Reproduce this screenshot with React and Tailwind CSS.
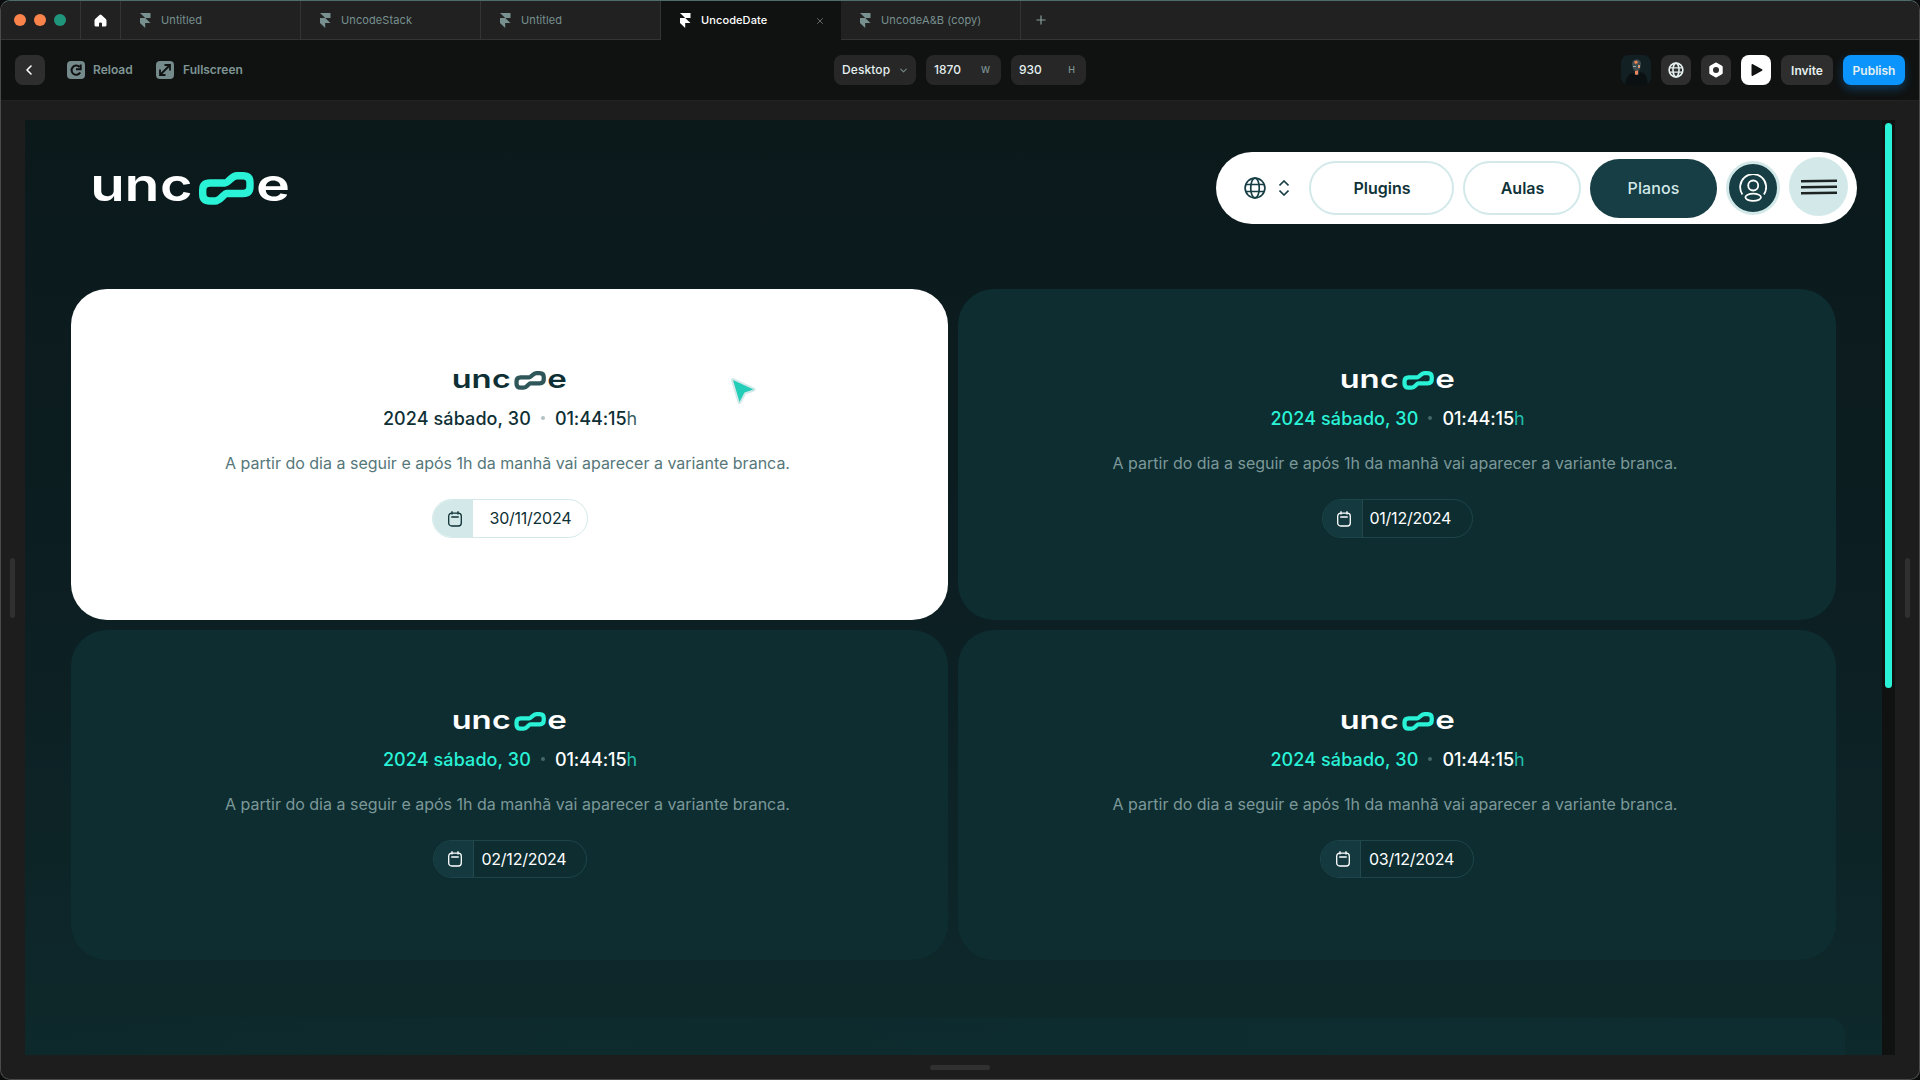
import { ChevronDown, ChevronLeft, Plus, X } from "lucide-react";

const tabs = [
  { name: "Untitled" },
  { name: "UncodeStack" },
  { name: "Untitled" },
  { name: "UncodeDate", active: true },
  { name: "UncodeA&B (copy)" },
];

const cards = [
  { date: "30/11/2024", light: true, pill: "h-[39px] w-[156px]", pad: "pb-px pl-[17px]" },
  { date: "01/12/2024", pill: "h-[39px] w-[151px]", pad: "pb-px pl-[7px]" },
  { date: "02/12/2024", pill: "h-[38px] w-[154px]", pad: "pl-[8px]" },
  { date: "03/12/2024", pill: "h-[38px] w-[154px]", pad: "pl-[8px]" },
];

function Logo({ className, link }) {
  return (
    <svg viewBox="0 0 195 33" className={className} overflow="visible">
      <g fill="currentColor" fontFamily="Inter, sans-serif" fontWeight="600" fontSize="45">
        <text x="-2.800" y="28.900" textLength="34.500" lengthAdjust="spacingAndGlyphs">u</text>
        <text x="31.500" y="28.900" textLength="35" lengthAdjust="spacingAndGlyphs">n</text>
        <text x="67" y="28.900" textLength="32.500" lengthAdjust="spacingAndGlyphs">c</text>
        <text x="163" y="28.900" textLength="34" lengthAdjust="spacingAndGlyphs">e</text>
      </g>
      <path
        d="M117 11H132C135.500 11 138.500 3.700 144 3.700H150Q157 3.700 157 10.500V14.500Q157 21.500 150 21.500H134C130.500 21.500 127.500 29 122 29H117Q109.700 29 109.700 22V18Q109.700 11 117 11Z"
        fill="none"
        stroke={link}
        strokeWidth="7.400"
      />
    </svg>
  );
}

function FramerIcon({ className }) {
  return (
    <svg viewBox="0 0 12 15" className={className} fill="currentColor">
      <path d="M1 0H11.500V5H6.200ZM1 5H6.200L11.500 10H6.200V15L1 10Z" />
    </svg>
  );
}

function TabBar() {
  return (
    <div className="flex h-[39px] shrink-0 bg-[#212121]">
      <div className="flex w-[80px] items-center gap-2 border-r border-b border-[#343434] pl-[13px]">
        <span className="size-3 rounded-full bg-[#f9834a]" />
        <span className="size-3 rounded-full bg-[#f9834a]" />
        <span className="size-3 rounded-full bg-[#1f967c]" />
      </div>
      <div className="flex w-[40px] items-center justify-center border-r border-b border-[#343434]">
        <svg viewBox="0 0 13 13" className="size-[13px]" fill="#fff">
          <path d="M5.500 0.900Q6.500 0.200 7.500 0.900L11.800 5Q12.500 5.800 12.500 6.800V11Q12.500 12.500 11 12.500H8V9.500Q8 8.500 6.500 8.500T5 9.500V12.500H2Q0.500 12.500 0.500 11V6.800Q0.500 5.800 1.200 5Z" />
        </svg>
      </div>
      {tabs.map((tab, i) => (
        <div
          key={i}
          className={
            tab.active
              ? "flex w-[180px] items-center bg-[#101211] pl-[18px] font-medium text-white"
              : "flex w-[180px] items-center border-r border-b border-[#343434] pl-[18px] text-[#789090]"
          }
        >
          <FramerIcon className="h-[15px] w-3" />
          <span className="ml-[10px] text-[11px] tracking-[0.1px]">{tab.name}</span>
          {tab.active && <X className="mr-4 ml-auto size-[10px] text-[#777]" />}
        </div>
      ))}
      <div className="flex flex-1 items-center border-b border-[#343434] pl-[13px]">
        <Plus className="size-[14px] text-[#8ba0a0]" strokeWidth={2} />
      </div>
    </div>
  );
}

function Toolbar() {
  return (
    <div className="flex h-[61px] shrink-0 items-center justify-between border-b border-[#232323] bg-[#101211] pr-[14px] pl-[14px] text-[12px] font-semibold text-[#7f9595]">
      <div className="flex flex-1 items-center">
        <div className="flex size-[30px] items-center justify-center rounded-lg bg-[#2e2e2e]">
          <ChevronLeft className="mr-0.5 size-4 text-white" strokeWidth={2.4} />
        </div>
        <svg viewBox="0 0 18 18" className="ml-[22px] size-[18px]" fill="none" stroke="#101211" strokeWidth="2">
          <rect width="18" height="18" rx="4" fill="#748a8b" stroke="none" />
          <path d="M12.500 6A4.600 4.600 0 1 0 13.200 11.500M13.700 3.500V8.200H9" />
        </svg>
        <span className="ml-2 w-10">Reload</span>
        <svg viewBox="0 0 18 18" className="ml-[23px] size-[18px]" fill="none" stroke="#101211" strokeWidth="1.800">
          <rect width="18" height="18" rx="4" fill="#748a8b" stroke="none" />
          <path d="M8.500 4H14V9.500M14 4L4 14M4 8.500V14H9.500" />
        </svg>
        <span className="ml-[9px]">Fullscreen</span>
      </div>

      <div className="flex gap-[10px] font-medium text-[#e4f0ef]">
        <div className="flex h-[30px] w-[82px] items-center justify-between rounded-lg bg-[#272727] pr-[7px] pl-2">
          <span className="tracking-[0.1px]">Desktop</span>
          <ChevronDown className="size-[11px] text-[#6f8484]" strokeWidth={2.6} />
        </div>
        <div className="flex h-[30px] w-[75px] items-center justify-between rounded-lg bg-[#272727] pr-[11px] pl-2">
          1870 <span className="text-[9px] text-[#7f9595]">W</span>
        </div>
        <div className="flex h-[30px] w-[75px] items-center justify-between rounded-lg bg-[#272727] pr-[11px] pl-2">
          930 <span className="text-[9px] text-[#7f9595]">H</span>
        </div>
      </div>

      <div className="flex flex-1 items-center justify-end gap-[10px] text-[#e4f0ef]">
        <svg viewBox="0 0 30 30" className="size-[30px] rounded-lg">
          <rect width="30" height="30" fill="#122024" />
          <path d="M4 30Q5 20 11 18L15 20L20 17Q26 18 27 30Z" fill="#0b1012" />
          <path d="M11 9Q11 4.500 15.500 4.500T20 9L19 14L17.500 16V20H14V16L12 14Z" fill="#3d4d50" />
          <path d="M13 6.500L16 5.500L17 8L14 9ZM17 10H19V13H17ZM14 16L17 15.500V19L15.500 20L14 19Z" fill="#ee8556" />
          <path d="M12 11.500H15M17 11.500H19" stroke="#9caeae" />
        </svg>
        <div className="flex size-[30px] items-center justify-center rounded-lg bg-[#2e2e2e]">
          <svg viewBox="0 0 16 16" className="size-4" fill="none" stroke="currentColor" strokeWidth="1.600">
            <circle cx="8" cy="8" r="6.900" />
            <ellipse cx="8" cy="8" rx="3" ry="6.900" />
            <path d="M1.500 5.800H14.500M1.500 10.200H14.500" strokeWidth="1.300" />
          </svg>
        </div>
        <div className="flex size-[30px] items-center justify-center rounded-lg bg-[#2e2e2e]">
          <svg viewBox="0 0 16 16" className="size-4">
            <path d="M8 2L13.200 5V11L8 14L2.800 11V5Z" fill="#fff" stroke="#fff" strokeWidth="3" strokeLinejoin="round" />
            <circle cx="8" cy="8" r="3" fill="#2e2e2e" />
          </svg>
        </div>
        <div className="flex size-[30px] items-center justify-center rounded-lg bg-white">
          <svg viewBox="0 0 12 14" className="ml-px h-[14px] w-3">
            <path d="M1.500 2V12L10.500 7Z" fill="#101211" stroke="#101211" strokeWidth="2" strokeLinejoin="round" />
          </svg>
        </div>
        <div className="flex h-[30px] w-[52px] items-center justify-center rounded-lg bg-[#2e2e2e] pt-px">Invite</div>
        <div className="flex h-[30px] w-[62px] items-center justify-center rounded-lg bg-[#0c94fd] pt-px shadow-[0_4px_10px_rgba(12,148,253,0.3)]">
          Publish
        </div>
      </div>
    </div>
  );
}

function Header() {
  return (
    <header className="flex items-start justify-between pt-8 pr-[25px] pl-[68px]">
      <Logo className="mt-5 h-[33px] w-[195px] text-white" link="#29f2d7" />
      <nav className="flex h-[72px] w-[641px] items-center rounded-full bg-white text-[16px] font-semibold text-[#103338]">
        <svg viewBox="0 0 22 22" className="ml-7 size-[22px]" fill="none" stroke="#163e44" strokeWidth="1.700">
          <circle cx="11" cy="11" r="9.900" />
          <ellipse cx="11" cy="11" rx="4.300" ry="9.900" />
          <path d="M2 7.500H20M2 14.500H20" />
        </svg>
        <svg viewBox="0 0 10 16" className="ml-[13px] h-4 w-[10px]" fill="none" stroke="#163e44" strokeWidth="1.600">
          <path d="M0.500 5.500L5 1L9.500 5.500M0.500 10.500L5 15L9.500 10.500" />
        </svg>
        <a className="ml-5 flex h-[54px] w-[145px] items-center justify-center rounded-full border-2 border-[#d3e9e9] pl-px">Plugins</a>
        <a className="ml-[9px] flex h-[54px] w-[118px] items-center justify-center rounded-full border-2 border-[#d3e9e9] pl-px">Aulas</a>
        <a className="ml-[9px] flex h-[59px] w-[127px] items-center justify-center rounded-full bg-[#163e44] font-medium tracking-[0.1px] text-[#d3e9e9]">Planos</a>
        <div className="ml-[9px] flex size-[54px] items-center justify-center rounded-full border-[3px] border-[#d3e9e9] bg-[#163e44]">
          <svg viewBox="0 0 28 28" className="size-7" fill="none" stroke="#fff" strokeWidth="1.800">
            <path d="M3.400 20.500A13 13 0 1 1 24.900 20.500" />
            <circle cx="14.200" cy="11.500" r="5" />
            <ellipse cx="14.200" cy="23.300" rx="7.800" ry="3.600" />
          </svg>
        </div>
        <div className="mb-[3px] ml-[9px] flex size-[59px] items-center justify-center rounded-full bg-[#d3e9e9]">
          <svg viewBox="0 0 36 16" className="h-4 w-9" stroke="#1e2324" strokeWidth="2.500">
            <path d="M0 2.300L36 1.700M0 8.300L36 7.700M0 14.300L36 13.700" />
          </svg>
        </div>
      </nav>
    </header>
  );
}

function DateCard({ card }) {
  const { light } = card;
  return (
    <div
      className={
        light
          ? "relative flex flex-col items-center rounded-[36px] bg-white pt-[82px] text-[#0e3035]"
          : "relative flex flex-col items-center rounded-[36px] bg-[#0d2d30] pt-[82px] text-white"
      }
    >
      <Logo className="h-[19px] w-[113px]" link={light ? "#2f5659" : "#29f2d7"} />
      <div className="mt-4 flex h-6 items-center pl-px text-[18px] font-medium">
        <span className={light ? "tracking-[0.1px]" : "tracking-[0.1px] text-[#29f2d7]"}>2024 sábado, 30</span>
        <span className={light ? "mx-[10px] size-1 rounded-full bg-[#b5c2c3]" : "mx-[10px] size-1 rounded-full bg-[#44686a]"} />
        <span className="tracking-[-0.1px]">01:44:15</span>
        <span className={light ? "font-normal text-[#3b6063]" : "font-normal text-[#22bfae]"}>h</span>
      </div>
      <p
        className={
          light
            ? "mt-[21px] mr-1 h-6 text-[16px] leading-6 text-[#56777a]"
            : "mt-[21px] mr-1 h-6 text-[16px] leading-6 text-[#7c9899]"
        }
      >
        A partir do dia a seguir e após 1h da manhã vai aparecer a variante branca.
      </p>
      <div className={`mt-6 overflow-hidden rounded-full border ${light ? "border-[#d3e9e9]" : "border-[#1d454a]"} ${card.pill}`}>
        <div className="flex h-full items-center">
          <div
            className={
              light
                ? "flex h-full w-10 items-center justify-center bg-[#d3e9e9] pl-1"
                : "flex h-full w-10 items-center justify-center border-r border-[#23494e] bg-[#143a40] pl-1"
            }
          >
            <svg viewBox="0 0 14 16" className="h-4 w-[14px]" fill="none" stroke="currentColor" strokeWidth="1.300" strokeLinecap="round">
              <rect x="0.700" y="2.200" width="12.600" height="12.800" rx="3" />
              <path d="M4 0.700V3M10 0.700V3M3.700 6H10.300" />
            </svg>
          </div>
          <span className={`text-[16px] tracking-[-0.25px] ${card.pad}`}>{card.date}</span>
        </div>
      </div>
      {light && (
        <svg viewBox="0 0 26 28" className="absolute top-[88px] left-[659px] h-7 w-[26px]">
          <path
            d="M3 3L23.500 12.500L14.500 15.500L9.500 25Z"
            fill="#24cdb7"
            stroke="#d3e9e9"
            strokeWidth="4"
            strokeLinejoin="round"
            paintOrder="stroke"
          />
        </svg>
      )}
    </div>
  );
}

export default function App() {
  return (
    <div className="h-[1080px] w-[1920px] bg-[#0b0c0c] font-['Inter',sans-serif]">
      <div className="flex h-full flex-col overflow-hidden rounded-[10px] border border-[#4a4a4a] border-t-[#4f6c6d] bg-[#1d1d1d]">
        <TabBar />
        <Toolbar />

        <div className="flex flex-1 pt-[19px]">
          <div className="flex w-6 items-center pl-[9px]">
            <div className="h-[60px] w-[5px] rounded-full bg-[#303030]" />
          </div>

          <div className="flex h-[935px] w-[1870px] overflow-hidden bg-[#101211]">
            <main className="w-[1857px] bg-linear-to-b from-[#0b191b] via-[#0c1e22] to-[#0e292b]">
              <Header />
              <section className="mt-[65px] grid grid-cols-[877px_878px] grid-rows-[331px_330px] gap-[10px] pl-[46px]">
                {cards.map((card) => (
                  <DateCard key={card.date} card={card} />
                ))}
              </section>
              <div className="mt-[58px] mr-[37px] ml-9 h-20 rounded-[16px] bg-linear-to-r from-[#0d2d30]/0 via-[#0d2d30]/70 to-[#0d2d30]" />
            </main>
            <div className="w-[13px] pt-[3px] pl-[3px]">
              <div className="h-[565px] w-[7px] rounded-full bg-[#29f2d7]" />
            </div>
          </div>

          <div className="flex flex-1 items-center pl-[10px]">
            <div className="h-[60px] w-[5px] rounded-full bg-[#303030]" />
          </div>
        </div>

        <div className="flex h-[24px] shrink-0 items-center justify-center">
          <div className="mt-[1px] h-[5px] w-[60px] rounded-full bg-[#303030]" />
        </div>
      </div>
    </div>
  );
}
